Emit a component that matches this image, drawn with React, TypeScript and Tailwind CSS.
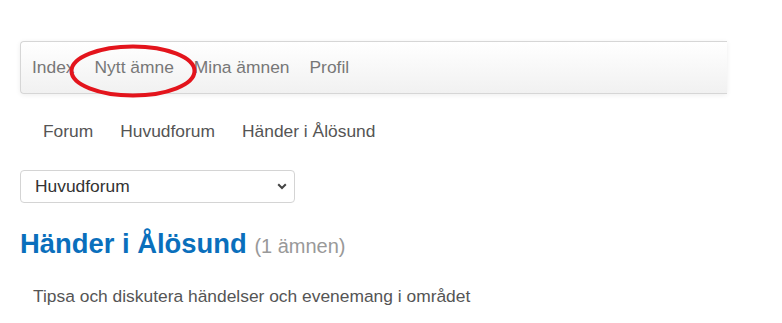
import React from "react"

const navItems = ["Index", "Nytt ämne", "Mina ämnen", "Profil"]
const crumbs = ["Forum", "Huvudforum", "Händer i Ålösund"]

export default function App() {
  return (
    <div
      className="relative min-h-screen bg-white pl-[20px] pt-[41px] text-[17.4px]"
      style={{ fontFamily: '"Liberation Sans", Arial, sans-serif' }}
    >
      {/* top navbar */}
      <nav className="h-[53px] w-[707px] rounded-l-[4px] border border-r-0 border-[#d6d6d6] bg-gradient-to-b from-white to-[#f1f1f1] shadow-[0_1px_5px_rgba(0,0,0,0.075)]">
        <ul className="flex h-full items-center gap-[20px] pl-[11px] pb-[1px] text-[#777]">
          {navItems.map((item) => (
            <li key={item} className="leading-[20px]">
              {item}
            </li>
          ))}
        </ul>
      </nav>

      {/* breadcrumbs */}
      <div className="mt-[17px] flex h-[40px] items-center gap-[27px] pl-[23px] text-[#555]">
        {crumbs.map((c) => (
          <span key={c} className="leading-[20px]">
            {c}
          </span>
        ))}
      </div>

      {/* forum jump */}
      <div className="relative mt-[19px] w-[275px]">
        <select
          defaultValue="Huvudforum"
          className="h-[33px] w-full appearance-none rounded-[4px] border border-[#d4d4d4] bg-white pl-[14px] text-[17.4px] text-[#333] outline-none"
          style={{ fontFamily: '"Liberation Sans", Arial, sans-serif' }}
        >
          <option>Huvudforum</option>
        </select>
        <svg
          className="pointer-events-none absolute right-[8px] top-[13px]"
          width="10"
          height="7"
          viewBox="0 0 10 7"
        >
          <path d="M1.2 1.2 L5 5 L8.8 1.2" fill="none" stroke="#444" strokeWidth="2" />
        </svg>
      </div>

      {/* heading */}
      <h1 className="mt-[26px] text-[27.4px] font-bold leading-[30px] text-[#0a6fbc]">
        Händer i Ålösund{" "}
        <span className="text-[20px] font-normal text-[#999]">(1 ämnen)</span>
      </h1>

      <p className="mt-[25px] pl-[13px] leading-[20px] text-[#555]">
        Tipsa och diskutera händelser och evenemang i området
      </p>

      {/* red annotation ring */}
      <svg
        className="pointer-events-none absolute left-[69px] top-[44px]"
        width="128"
        height="54"
        viewBox="0 0 128 54"
      >
        <ellipse cx="64" cy="27" rx="61.5" ry="24.5" fill="none" stroke="#e3141c" strokeWidth="4" />
      </svg>
    </div>
  )
}
